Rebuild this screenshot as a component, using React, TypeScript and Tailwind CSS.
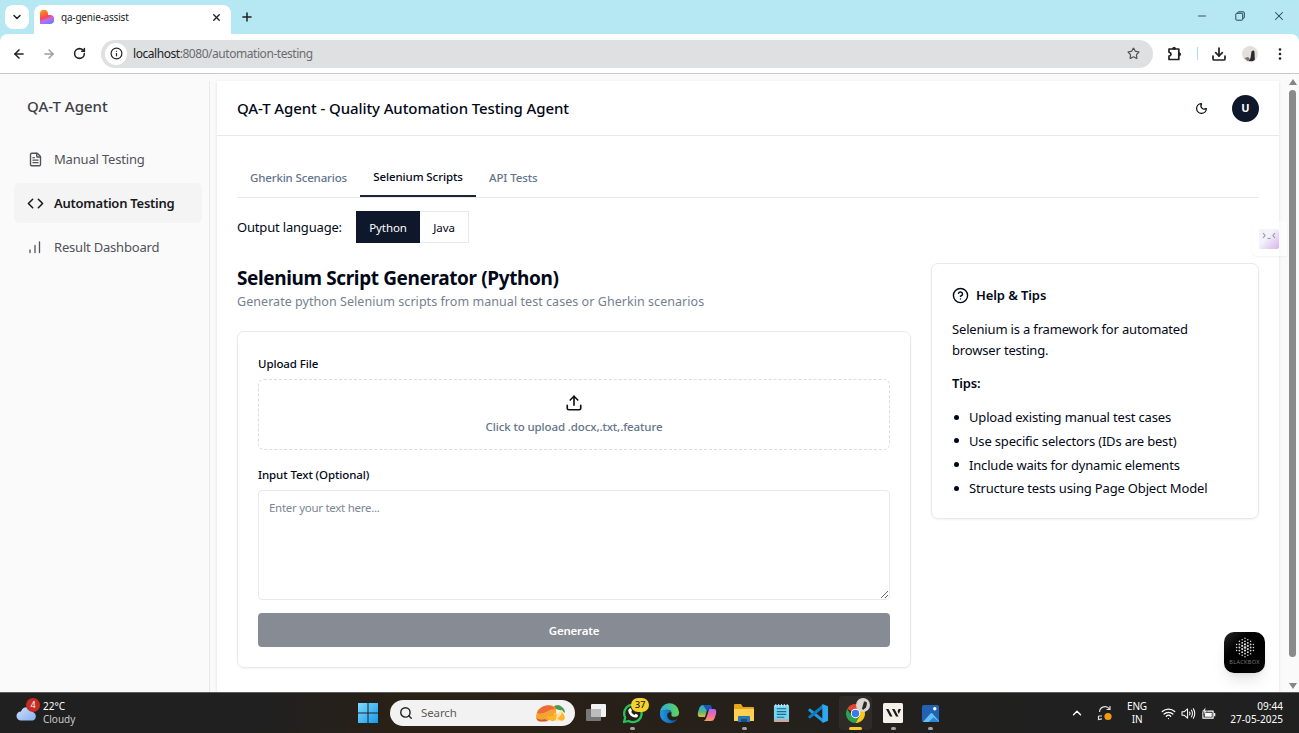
import React from "react";
import {
  ArrowLeft,
  ArrowRight,
  ChevronDown,
  ChevronUp,
  CircleHelp,
  Code,
  Download,
  FileText,
  Info,
  Minus,
  Moon,
  Plus,
  RotateCw,
  Search,
  Star,
  Upload,
  Wifi,
  X,
} from "lucide-react";

function TabFavicon() {
  return (
    <svg viewBox="0 0 14 14" className="size-[14px] shrink-0">
      <defs>
        <linearGradient id="fav" x1="0.2" y1="0" x2="0.6" y2="1">
          <stop offset="0.1" stopColor="#ff8a1e" />
          <stop offset="0.5" stopColor="#f7464f" />
          <stop offset="0.7" stopColor="#c26bea" />
          <stop offset="1" stopColor="#6f7bff" />
        </linearGradient>
      </defs>
      <path d="M0 4a4 4 0 0 1 8-.5V5h2a4.300 4.300 0 0 1 0 9H0z" fill="url(#fav)" />
    </svg>
  );
}

function PuzzleIcon() {
  return (
    <svg viewBox="0 0 16 16" className="size-4" fill="none" stroke="#222" strokeWidth="1.700" strokeLinejoin="round">
      <path d="M2 3h9.800v10.500H2v-3.300q2-.4 2-2t-2-2z" />
      <path d="M5.500 3q0-1.700 1.600-1.700T8.700 3zM11.800 6.600q1.800 0 1.800 1.700t-1.800 1.700z" fill="#222" strokeWidth="1" />
    </svg>
  );
}

function RestoreIcon() {
  return (
    <svg viewBox="0 0 10 10" className="size-[10px]" fill="none" stroke="currentColor" strokeWidth="1">
      <rect x="0.800" y="2.300" width="6.900" height="6.900" rx="0.800" />
      <path d="M2.800 2V1.500Q2.800.8 3.500.8H8.200Q9.300.8 9.300 1.900V6.500Q9.300 7.200 8.600 7.200H8" />
    </svg>
  );
}

function BrowserChrome() {
  return (
    <div className="shrink-0">
      <div className="flex h-[34px] items-end bg-[#b5e8f2]">
        <div className="mb-[5px] ml-[5px] flex size-6 items-center justify-center rounded-[8px] bg-white">
          <ChevronDown className="size-3 text-[#222]" strokeWidth={3} />
        </div>
        <div className="ml-[5px] flex h-[29px] w-[197px] items-center rounded-t-[8px] bg-white pr-[9px] pb-[5px] pl-[6px]">
          <TabFavicon />
          <span className="ml-[7px] text-[10px] tracking-[-0.2px] text-[#222]">qa-genie-assist</span>
          <X className="ml-auto size-[11px] text-[#222]" strokeWidth={3} />
        </div>
        <Plus className="mb-[10px] ml-[9px] size-[14px] text-[#222]" strokeWidth={2.600} />
        <div className="mr-[13px] mb-[11px] ml-auto flex items-center gap-[27px] text-[#27474e]">
          <Minus className="size-3" strokeWidth={1.800} />
          <RestoreIcon />
          <X className="size-[14px]" strokeWidth={1.800} />
        </div>
      </div>
      <div className="bg-[#b5e8f2]">
        <div className="flex h-[40px] items-center rounded-t-[8px] border-b border-[#c9c9cb] bg-white pr-[17px] pl-[12px]">
          <ArrowLeft className="size-[14px] text-[#222]" strokeWidth={2.600} />
          <ArrowRight className="ml-4 size-[14px] text-[#9b9b9b]" strokeWidth={2.400} />
          <RotateCw className="ml-[17px] size-[13px] text-[#222]" strokeWidth={2.800} />
          <div className="ml-[15px] flex h-[28px] w-[1052px] items-center rounded-full bg-[#dfe0e2] pr-[13px] pl-[4px]">
            <span className="flex size-[22px] items-center justify-center rounded-full bg-white">
              <Info className="size-[13px] text-[#222]" strokeWidth={2.200} />
            </span>
            <span className="ml-[6px] pt-px text-[12px] tracking-[-0.45px] text-[#6b6c6f]">
              <span className="text-[#222]">localhost</span>:8080/automation-testing
            </span>
            <Star className="ml-auto size-[13px] text-[#555]" strokeWidth={2.200} />
          </div>
          <div className="ml-auto flex items-center">
            <PuzzleIcon />
            <span className="ml-[14px] h-[13px] w-px bg-[#a5dff0]" />
            <Download className="ml-[13px] size-4 text-[#222]" strokeWidth={2.600} />
            <svg viewBox="0 0 16 16" className="ml-[15px] size-4">
              <circle cx="8" cy="8" r="8" fill="#e5dfdb" />
              <path d="M9.500 5.500q2.500-2 3 .5l.3 8-2.300 1.200-4-.2 2-2.800z" fill="#2a2a2c" />
              <path d="m2.500 12 3.500-1 2 2-2 2.300z" fill="#77706d" />
            </svg>
            <svg viewBox="0 0 4 14" className="ml-[20px] h-[14px] w-[4px]" fill="#222">
              <circle cx="2" cy="2.500" r="1.300" />
              <circle cx="2" cy="7" r="1.300" />
              <circle cx="2" cy="11.500" r="1.300" />
            </svg>
          </div>
        </div>
      </div>
    </div>
  );
}

function BarsIcon() {
  return (
    <svg viewBox="0 0 14 14" className="size-[14px]" fill="none" stroke="currentColor" strokeWidth="1.300" strokeLinecap="round">
      <path d="M2 12.500V10M7 12.500V5.500M11.500 12.500V2" />
    </svg>
  );
}

function Sidebar() {
  return (
    <aside className="mt-[7px] flex w-[210px] shrink-0 flex-col border-r border-[#e9e9ec] pr-[7px] pl-[14px]">
      <div className="pt-[13px] pl-[13px] text-[15px] leading-[24px] font-medium text-[#3f3f46]">QA-T Agent</div>
      <nav className="mt-[21px] flex flex-col gap-1 text-[13px] text-[#52525b]">
        <a className="flex h-10 items-center rounded-[5px] pl-[14px]">
          <FileText className="size-[15px]" strokeWidth={2.200} />
          <span className="ml-[11px] pt-[2px] tracking-[-0.18px]">Manual Testing</span>
        </a>
        <a className="flex h-10 items-center rounded-[5px] bg-[#f4f4f5] pl-[13px] font-semibold text-[#18181b]">
          <Code className="size-[17px]" strokeWidth={2.200} />
          <span className="ml-[10px] pt-px tracking-[-0.25px]">Automation Testing</span>
        </a>
        <a className="flex h-10 items-center rounded-[5px] pl-[14px]">
          <BarsIcon />
          <span className="ml-3 pt-px tracking-[-0.2px]">Result Dashboard</span>
        </a>
      </nav>
    </aside>
  );
}

function GeneratorCard() {
  return (
    <div className="mt-[20px] flex h-[337px] flex-col rounded-[7px] border border-[#e6e9ee] px-5 pt-[23px] shadow-xs">
      <div className="text-[11.500px] leading-[18px] font-medium tracking-[-0.1px]">Upload File</div>
      <div className="mt-[6px] flex h-[71px] flex-col items-center rounded-[6px] border border-dashed border-[#d9dce2] pt-[14px]">
        <Upload className="size-[18px] text-[#111]" strokeWidth={2.200} />
        <span className="mt-[7px] text-[11.500px] leading-4 font-medium tracking-[-0.12px] text-[#64748b]">Click to upload .docx,.txt,.feature</span>
      </div>
      <div className="mt-4 text-[11.500px] leading-[18px] font-medium tracking-[-0.1px]">Input Text (Optional)</div>
      <div className="mt-[6px]">
        <textarea
          placeholder="Enter your text here..."
          className="block h-[110px] w-full resize-y rounded-[4px] border border-[#e6e9ee] px-[10px] py-[8px] text-[11.500px] leading-[17px] tracking-[-0.28px] placeholder:text-[#7b8797]"
        />
      </div>
      <button className="mt-[13px] h-[34px] shrink-0 rounded-[4px] bg-[#868b94] pt-px text-[11.500px] font-semibold tracking-[-0.2px] text-white">Generate</button>
    </div>
  );
}

const tips = [
  "Upload existing manual test cases",
  "Use specific selectors (IDs are best)",
  "Include waits for dynamic elements",
  "Structure tests using Page Object Model",
];

function HelpCard() {
  return (
    <div className="-ml-px h-[256px] rounded-[7px] border border-[#e6e9ee] px-5 pt-[21px] text-[13px] leading-[20px] tracking-[-0.17px] shadow-xs">
      <div className="flex items-center gap-[7px] font-semibold">
        <CircleHelp className="size-[17px]" />
        <span className="tracking-[-0.1px]">Help &amp; Tips</span>
      </div>
      <p className="mt-[14px] leading-[20.500px]">
        Selenium is a framework for automated
        <br />
        browser testing.
      </p>
      <div className="mt-[13px] font-semibold">Tips:</div>
      <ul className="mt-[14px] flex flex-col gap-[3.800px]">
        {tips.map((tip) => (
          <li key={tip} className="flex items-center gap-[10px] pl-[2px] whitespace-nowrap">
            <span className="size-[5px] shrink-0 rounded-full bg-[#020817]" />
            {tip}
          </li>
        ))}
      </ul>
    </div>
  );
}

const dotColumns = [3, 5, 6, 7, 6, 5, 3];

function BlackboxButton() {
  return (
    <div className="absolute right-[34px] bottom-[19px] flex size-[41px] flex-col items-center rounded-[10px] bg-linear-to-br from-[#292929] via-black to-[#111] shadow-lg">
      <svg viewBox="0 0 40 28" className="h-[28px] w-[40px] shrink-0" fill="#d8d8d8">
        {dotColumns.map((count, col) =>
          Array.from({ length: count }, (_, i) => {
            const offset = i - (count - 1) / 2;
            return (
              <circle
                key={`${col}-${i}`}
                cx={20 + (col - 3) * 2.800}
                cy={15.500 + offset * 3.100}
                r={Math.max(0.600, 1.300 - Math.hypot(offset, (col - 3) * 0.900) * 0.190)}
              />
            );
          }),
        )}
      </svg>
      <span className="mt-[-1px] text-[5.500px] leading-[6px] tracking-[0.35px] text-[#777]">BLACKBOX</span>
    </div>
  );
}

function MainPanel() {
  return (
    <main className="mt-[7px] ml-[7px] w-[1062px] shrink-0 overflow-hidden bg-white shadow-sm">
      <header className="flex h-[55px] items-center border-b border-[#e6e9ee] px-5">
        <h1 className="text-[15px] font-medium tracking-[-0.1px]">QA-T Agent - Quality Automation Testing Agent</h1>
        <Moon className="ml-auto size-[13px]" strokeWidth={2.200} />
        <span className="ml-6 flex size-[27px] items-center justify-center rounded-full bg-[#0f172a] text-[11px] font-bold text-white">U</span>
      </header>
      <div className="px-5 pt-[22px]">
        <div className="flex h-[40px] border-b border-[#e6e9ee] text-[11.500px] leading-[39px] font-medium tracking-[-0.16px] text-[#64748b]">
          <div className="w-[123px] pl-[13px]">Gherkin Scenarios</div>
          <div className="h-[39px] w-[116px] border-b-2 border-[#1e2536] text-center leading-[38px] tracking-[-0.1px] text-[#020817]">Selenium Scripts</div>
          <div className="pl-[13px] tracking-[-0.1px]">API Tests</div>
        </div>
        <div className="mt-[13px] flex h-8 items-center">
          <span className="w-[119px] pt-[2px] text-[13px] tracking-[-0.18px]">Output language:</span>
          <div className="flex h-8 items-stretch border border-[#e6e9ee] text-[11.500px] leading-[32px] tracking-[-0.1px]">
            <span className="-my-px -ml-px w-[64px] bg-[#0f172a] text-center leading-[34px] text-white">Python</span>
            <span className="w-[48px] text-center">Java</span>
          </div>
        </div>
        <div className="mt-[20px] grid grid-cols-[674px_327px] gap-[21px]">
          <section>
            <h2 className="mt-[2px] text-[19px] leading-[26px] font-bold tracking-[-0.38px]">Selenium Script Generator (Python)</h2>
            <p className="-mb-px pt-px text-[12.500px] leading-5 tracking-[0.050px] text-[#75818f]">Generate python Selenium scripts from manual test cases or Gherkin scenarios</p>
            <GeneratorCard />
          </section>
          <HelpCard />
        </div>
      </div>
    </main>
  );
}

function ScrollBar() {
  return (
    <div className="ml-auto flex w-[13px] flex-col items-center bg-[#fafafa] pt-[5px] pb-[3px]">
      <svg viewBox="0 0 8 6" className="h-[6px] w-[8px]" fill="#858585">
        <path d="M4 0 8 6H0z" />
      </svg>
      <div className="mt-[5px] h-[567px] w-[7px] rounded-full bg-[#8a8a8a]" />
      <svg viewBox="0 0 8 6" className="mt-auto h-[6px] w-[8px]" fill="#858585">
        <path d="M0 0H8L4 6z" />
      </svg>
    </div>
  );
}

function TaskIcon({ children, mark, active }: { children: React.ReactNode; mark?: boolean; active?: boolean }) {
  return (
    <div className={`relative flex h-[34px] w-[33px] items-center justify-center rounded-[4px] ${active ? "bg-white/5" : ""}`}>
      {children}
      {active && <span className="absolute bottom-0 left-[10px] h-[3px] w-[13px] rounded-full bg-[#f6cb2d]" />}
      {mark && <span className="absolute bottom-0 left-[14px] h-[3px] w-[5px] rounded-full bg-[#a3a3a3]" />}
    </div>
  );
}

function WindowsLogo() {
  return (
    <svg viewBox="0 0 20 20" className="size-5">
      <defs>
        <linearGradient id="win" x1="0" y1="0" x2="1" y2="1">
          <stop stopColor="#7ddcff" />
          <stop offset="1" stopColor="#1499ec" />
        </linearGradient>
      </defs>
      <path d="M0 0h9.500v9.500H0zM10.500 0H20v9.500h-9.500zM0 10.500h9.500V20H0zM10.500 10.500H20V20h-9.500z" fill="url(#win)" />
    </svg>
  );
}

function Mangoes() {
  return (
    <svg viewBox="0 0 32 18" className="h-[18px] w-[32px]">
      <path d="M18 3q5-4 9 0 3 2 3 6-2-1-3-3-5 1-9-3z" fill="#4a9a4c" />
      <path d="M1 12Q2 4 9 2q9-3 12 3 1 7-4 10-6 3-12 2-4-1-4-5z" fill="#f5a52f" />
      <path d="M2 9Q6 1 13 1.500q6 .5 7 4-3-1-8 2-5 3-10 1.500z" fill="#ec6a3e" />
      <path d="M19 9q5 1 7-3 5 5 3 9-2 3-9 2z" fill="#fbe3b0" />
      <path d="M12 12q6 2 9-4 2 7-2 9-5 1-7-5zM22 14q4-1 5-6 4 5 2 8-3 2-7-2z" fill="#ffb52a" />
      <path d="M1 14q5 3 9 1l3 2q-6 1-10 0z" fill="#d1592b" />
    </svg>
  );
}

function TaskView() {
  return (
    <svg viewBox="0 0 22 20" className="h-5 w-[22px]">
      <rect x="1" y="6" width="15" height="12" rx="1" fill="#777" />
      <rect x="6" y="1" width="15" height="13" rx="1" fill="#f2f2f2" />
      <path d="M6 6h10v8H6z" fill="#bcbcbc" />
    </svg>
  );
}

function WhatsApp() {
  return (
    <>
      <svg viewBox="0 0 22 22" className="size-[22px]" fill="none">
        <path d="M2 20l1.200-4.500A8.700 8.700 0 1 1 6.600 19z" stroke="#25c45a" strokeWidth="2.300" strokeLinejoin="round" />
        <path d="M7.500 6.500q1-1 1.700.5l.8 1.800-.8 1.200q1.200 2.200 3.300 3l1.200-1.200 2.300 1.100q0 2.800-3 2.600-6-1.300-6.800-6.800 0-1.500 1.300-2.200z" fill="#fff" />
      </svg>
      <span className="absolute top-[2px] left-[15px] flex h-[14px] w-[18px] items-center justify-center rounded-full bg-[#f7d12c] text-[9px] font-medium text-[#222]">37</span>
    </>
  );
}

function Edge() {
  return (
    <svg viewBox="0 0 22 22" className="size-[21px]">
      <defs>
        <linearGradient id="edgeTop" x1="0" x2="1">
          <stop stopColor="#2ba9e5" />
          <stop offset="1" stopColor="#61d653" />
        </linearGradient>
        <linearGradient id="edgeLow" x1="0" x2="1">
          <stop stopColor="#219be8" />
          <stop offset="1" stopColor="#0b4f9d" />
        </linearGradient>
      </defs>
      <path d="M1 11A10 10 0 0 1 21 9.500q.5 5-5 5-3.500 0-3-2.500Q14 7 8.500 7 3 7 1 11z" fill="url(#edgeTop)" />
      <path d="M1 11q2-4 7.500-4 3.500 0 4.500 3-4-1-4.500 3 1 5.500 6 5.300 3 0 5-2A10 10 0 0 1 1 11z" fill="url(#edgeLow)" />
    </svg>
  );
}

function Copilot() {
  return (
    <svg viewBox="0 0 20 20" className="size-5">
      <defs>
        <linearGradient id="copA" x1="0" y1="0" x2="0" y2="1">
          <stop stopColor="#23a7ef" />
          <stop offset="0.6" stopColor="#56b77c" />
          <stop offset="1" stopColor="#f4bb2c" />
        </linearGradient>
        <linearGradient id="copB" x1="0" y1="0" x2="0" y2="1">
          <stop stopColor="#ae67f1" />
          <stop offset="0.5" stopColor="#f268a8" />
          <stop offset="1" stopColor="#fa9b5f" />
        </linearGradient>
      </defs>
      <path d="M6 2h7q-2 1-3 5l-2 7H3q-3 0-2-5l1.500-4.500Q3.500 2 6 2z" fill="url(#copA)" />
      <path d="M14 18H7q2-1 3-5l2-7h5q3 0 2 5l-1.500 4.500Q16.500 18 14 18z" fill="url(#copB)" />
      <path d="M6 2h7q1.500 0 2 4h-3q-1 0-2 2z" fill="#1458ba" />
    </svg>
  );
}

function Explorer() {
  return (
    <svg viewBox="0 0 22 20" className="h-[20px] w-[22px]">
      <path d="M1 2q0-1 1-1h6l2 3h10q1 0 1 1v13H1z" fill="#e7a51a" />
      <path d="M1 6h20v11q0 1-1 1H2q-1 0-1-1z" fill="#ffd052" />
      <path d="M5 14q0-1 1-1h10q1 0 1 1v5H5z" fill="#2877b3" />
      <path d="M8 16h6v3H8z" fill="#164f82" />
    </svg>
  );
}

function Notepad() {
  return (
    <svg viewBox="0 0 18 21" className="h-[20px] w-[17px]">
      <rect x="1" y="2" width="16" height="18" rx="1" fill="#79d4ed" />
      <path d="M1 17h16v2q0 1-1 1H2q-1 0-1-1z" fill="#c7a99d" />
      <path d="M4 6h10M4 9h10M4 12h10M4 15h8" stroke="#196b95" strokeWidth="1.300" />
      <path d="M3 1v3M6 1v3M9 1v3M12 1v3M15 1v3" stroke="#d6eff8" />
    </svg>
  );
}

function VsCode() {
  return (
    <svg viewBox="0 0 22 22" className="size-[21px]" strokeLinejoin="round">
      <path d="M2 7.500 15.500 18.500" stroke="#1f9be6" strokeWidth="3.200" strokeLinecap="round" />
      <path d="M2 14.500 15.500 3.500" stroke="#1279c0" strokeWidth="3.200" strokeLinecap="round" />
      <path d="M15 1l6 2.500v15L15 21z" fill="#30a6ef" />
    </svg>
  );
}

function Chrome() {
  return (
    <>
      <svg viewBox="0 0 22 22" className="size-[21px]">
        <path d="M11 11 2.340 6A10 10 0 0 1 19.660 6z" fill="#e64434" />
        <path d="M11 6h8.660A10 10 0 0 1 11 21l4.300-8z" fill="#fbc616" />
        <path d="M15.300 13.500 11 21A10 10 0 0 1 2.340 6L6.700 13.500z" fill="#2ba24c" />
        <circle cx="11" cy="11" r="5" fill="#fff" />
        <circle cx="11" cy="11" r="3.900" fill="#367de9" />
      </svg>
      <svg viewBox="0 0 14 14" className="absolute top-[2px] left-[17px] size-[14px]">
        <circle cx="7" cy="7" r="7" fill="#d9d6d3" />
        <path d="M8 3.500q3-.5 3 2l-1 4-3 2.500-1-1.500z" fill="#29292b" />
      </svg>
    </>
  );
}

function WriterApp() {
  return (
    <svg viewBox="0 0 20 20" className="size-5">
      <rect width="20" height="20" rx="1.500" fill="#f5f1e8" />
      <path d="M3 6h2.500l4 7.500H7zM9 6h2.500l4 7.500H13zM15.500 6H18l-2.200 5-1.200-2.500z" fill="#181818" />
    </svg>
  );
}

function Photos() {
  return (
    <svg viewBox="0 0 20 20" className="size-[19px]">
      <rect x="1" y="1" width="18" height="18" rx="2" fill="#2262b5" />
      <path d="m2 19 8-9q1-1 2 0l7 8q0 1-1 1z" fill="#65c1f3" />
      <path d="m8 19 5-5 6 4.500-1 .5z" fill="#2b88d8" />
      <circle cx="14.500" cy="5" r="1.800" fill="#fff" />
    </svg>
  );
}

function Weather() {
  return (
    <div className="relative h-[26px] w-[24px]">
      <svg viewBox="0 0 22 22" className="h-[23px] w-[22px]">
        <defs>
          <linearGradient id="cloud" x1="0" y1="0" x2="1" y2="1">
            <stop stopColor="#d0e0fc" />
            <stop offset="1" stopColor="#86afef" />
          </linearGradient>
        </defs>
        <path d="M5 20a4.500 4.500 0 0 1 0-9q2-5 7-4 4 1 4.500 4.500A4.500 4.500 0 0 1 17 20z" fill="url(#cloud)" />
      </svg>
      <span className="absolute -top-[2px] left-[10px] flex size-[14px] items-center justify-center rounded-full bg-[#c62c24] text-[9px] text-white">4</span>
    </div>
  );
}

function SystemTray() {
  return (
    <div className="ml-auto flex items-center pr-4 text-white">
      <ChevronUp className="size-[14px]" strokeWidth={2.400} />
      <svg viewBox="0 0 16 16" className="ml-[13px] size-4" fill="none">
        <path d="M2.500 7A5.500 5.500 0 0 1 12.500 4M13 1v3.500H9.500M1.500 11H5M1.500 11v3.500l3.500-.7" stroke="#ddd" strokeWidth="1.200" />
        <circle cx="11" cy="11.500" r="3.600" fill="#f39a13" />
      </svg>
      <div className="ml-[12px] w-[24px] text-center text-[10px] leading-[13.500px] tracking-[-0.2px]">
        ENG
        <br />
        IN
      </div>
      <Wifi className="ml-[12px] size-[15px]" strokeWidth={2} />
      <svg viewBox="0 0 16 14" className="ml-[5px] h-[13px] w-[15px]" fill="none" stroke="#fff" strokeWidth="1.100" strokeLinejoin="round">
        <path d="M1 5v4h2.500L7 12V2L3.500 5zM9 5q1.200 2 0 4M11 3q2.500 4 0 8M13 1.500q3.500 5.500 0 11" />
      </svg>
      <svg viewBox="0 0 16 14" className="ml-[5px] h-[13px] w-[15px]">
        <path d="M2 4.500h11v7.500H2z" fill="none" stroke="#fff" strokeWidth="1.200" strokeLinejoin="round" />
        <path d="M4 6.200h7.500v4.300H4zM14 6.500h1.300v3.500H14z" fill="#fff" />
        <path d="M5 0 1 5H3.500L2.500 8.500 7 4H4.500z" fill="#fff" stroke="#202020" strokeWidth=".5" />
      </svg>
      <div className="ml-[13px] w-[54px] text-right text-[10px] leading-[13.500px] tracking-[0.05px] whitespace-nowrap">
        <div>09:44</div>
        <div className="flex justify-end">27-05-2025</div>
      </div>
    </div>
  );
}

function Taskbar() {
  return (
    <footer className="flex h-[41px] shrink-0 items-center border-t border-[#5b5b59] bg-linear-to-r from-[#202020] from-20% via-[#2b2014] via-32% to-[#202020] to-80%">
      <div className="flex w-[358px] items-center pl-4 text-white">
        <Weather />
        <div className="ml-[3px] text-[10px] leading-[13.500px] tracking-[-0.02px]">
          22°C
          <br />
          <span className="text-[#c9c9c9]">Cloudy</span>
        </div>
      </div>
      <WindowsLogo />
      <div className="ml-3 flex h-[26px] w-[185px] items-center rounded-full bg-[#f3f2f2] pr-[8px] pl-[9px]">
        <Search className="size-[14px] text-[#222]" strokeWidth={2.400} />
        <span className="ml-[8px] text-[11.500px] tracking-[-0.1px] text-[#5c5c5c]">Search</span>
        <span className="ml-auto">
          <Mangoes />
        </span>
      </div>
      <div className="ml-[4px] flex gap-[4.200px]">
        <TaskIcon><TaskView /></TaskIcon>
        <TaskIcon mark><WhatsApp /></TaskIcon>
        <TaskIcon><Edge /></TaskIcon>
        <TaskIcon><Copilot /></TaskIcon>
        <TaskIcon mark><Explorer /></TaskIcon>
        <TaskIcon><Notepad /></TaskIcon>
        <TaskIcon><VsCode /></TaskIcon>
        <TaskIcon active><Chrome /></TaskIcon>
        <TaskIcon mark><WriterApp /></TaskIcon>
        <TaskIcon mark><Photos /></TaskIcon>
      </div>
      <SystemTray />
    </footer>
  );
}

export default function App() {
  return (
    <div className="flex h-[733px] w-[1299px] flex-col overflow-hidden bg-white font-['Noto_Sans',sans-serif] text-[#020817]">
      <BrowserChrome />
      <div className="relative flex min-h-0 flex-1 overflow-hidden bg-[#fafafa]">
        <Sidebar />
        <MainPanel />
        <ScrollBar />
        <div className="absolute top-[148px] right-[12px] flex h-[34px] w-[35px] items-center rounded-l-[6px] bg-white/60 pl-[7px] shadow-xs">
          <span className="flex size-5 items-start justify-center rounded-[2px] bg-linear-to-br from-[#f4f2fa] from-40% to-[#d5b5ee] pt-[3px]">
            <svg viewBox="0 0 14 8" className="h-2 w-[14px]" fill="none" stroke="#9a9aae" strokeWidth="1.200">
              <path d="M1 1l2 2.500L1 6M5.500 6.500h3M13 1l-2 2.500L13 6" />
            </svg>
          </span>
        </div>
        <BlackboxButton />
      </div>
      <Taskbar />
    </div>
  );
}
